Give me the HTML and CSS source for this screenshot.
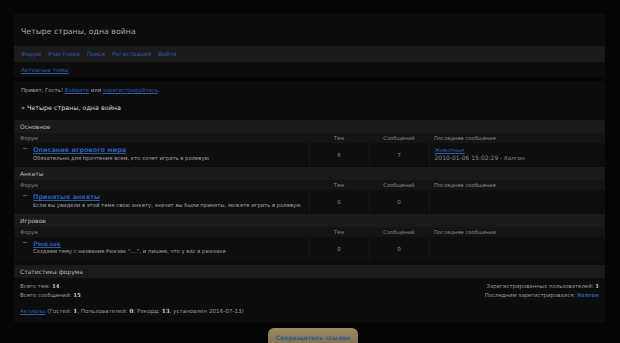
FILE: index.html
```html
<!DOCTYPE html>
<html lang="ru">
<head>
    <meta charset="UTF-8">
    <title>Четыре страны, одна война</title>
    <link rel="stylesheet" href="styles.css">
</head>
<body>
<div class="header-block">
    <div class="site-title">Четыре страны, одна война</div>
    <div class="navbar">
        <a href="#">Форум</a>
        <a href="#">Участники</a>
        <a href="#">Поиск</a>
        <a href="#">Регистрация</a>
        <a href="#">Войти</a>
    </div>
    <div class="subnav"><a href="#">Активные темы</a></div>
</div>

<div class="main-block">
    <div class="greeting">Привет, Гость! <a href="#">Войдите</a> или <a href="#">зарегистрируйтесь</a>.</div>
    <div class="crumbs">» Четыре страны, одна война</div>

    <table class="forum-table">
        <colgroup><col class="w-forum"><col class="w-num"><col class="w-num"><col class="w-last"></colgroup>
        <tr class="cat-head"><td colspan="4">Основное</td></tr>
        <tr class="col-head">
            <td class="c-forum">Форум</td>
            <td class="c-num">Тем</td>
            <td class="c-num">Сообщений</td>
            <td class="c-last">Последнее сообщение</td>
        </tr>
        <tr class="forum-row">
            <td class="c-forum">
                <div class="fcell">
                    <span class="ficon"></span>
                    <div class="finfo">
                        <a href="#" class="fname">Описание игрового мира</a>
                        <div class="fdesc">Обязательно для прочтения всем, кто хочет играть в ролевую</div>
                    </div>
                </div>
            </td>
            <td class="c-num">6</td>
            <td class="c-num">7</td>
            <td class="c-last"><a href="#">Животные</a><br><span class="pdate">2010-01-06 15:02:29</span> - Холгон</td>
        </tr>
    </table>

    <table class="forum-table">
        <colgroup><col class="w-forum"><col class="w-num"><col class="w-num"><col class="w-last"></colgroup>
        <tr class="cat-head"><td colspan="4">Анкеты</td></tr>
        <tr class="col-head">
            <td class="c-forum">Форум</td>
            <td class="c-num">Тем</td>
            <td class="c-num">Сообщений</td>
            <td class="c-last">Последнее сообщение</td>
        </tr>
        <tr class="forum-row">
            <td class="c-forum">
                <div class="fcell">
                    <span class="ficon"></span>
                    <div class="finfo">
                        <a href="#" class="fname">Принятые анкеты</a>
                        <div class="fdesc">Если вы увидели в этой теме свою анкету, значит вы были приняты, можете играть в ролевую</div>
                    </div>
                </div>
            </td>
            <td class="c-num">0</td>
            <td class="c-num">0</td>
            <td class="c-last"></td>
        </tr>
    </table>

    <table class="forum-table gap-top">
        <colgroup><col class="w-forum"><col class="w-num"><col class="w-num"><col class="w-last"></colgroup>
        <tr class="cat-head"><td colspan="4">Игровое</td></tr>
        <tr class="col-head">
            <td class="c-forum">Форум</td>
            <td class="c-num">Тем</td>
            <td class="c-num">Сообщений</td>
            <td class="c-last">Последнее сообщение</td>
        </tr>
        <tr class="forum-row">
            <td class="c-forum">
                <div class="fcell">
                    <span class="ficon"></span>
                    <div class="finfo">
                        <a href="#" class="fname serif">Рюкзак</a>
                        <div class="fdesc">Создаем тему с название Рюкзак "....", и пишем, что у вас в рюкзаке</div>
                    </div>
                </div>
            </td>
            <td class="c-num">0</td>
            <td class="c-num">0</td>
            <td class="c-last"></td>
        </tr>
    </table>

    <div class="stats">
        <div class="cat-head">Статистика форума</div>
        <div class="stats-body">
            <div class="stats-left">
                <div>Всего тем: <b>14</b></div>
                <div>Всего сообщений: <b>15</b></div>
            </div>
            <div class="stats-right">
                <div>Зарегистрированных пользователей: <b>1</b></div>
                <div>Последним зарегистрировался: <a href="#" class="bold-link">Холгон</a></div>
            </div>
        </div>
        <div class="online"><a href="#">Активны</a> (Гостей: <b>1</b>, Пользователей: <b>0</b>; Рекорд: <b>13</b>, установлен 2016-07-13)</div>
    </div>
</div>

<div class="bottom">
    <a href="#" class="short-btn">Сокращатель ссылок</a>
</div>
</body>
</html>
```

FILE: styles.css
```css
body {
    margin: 0;
    padding: 14px 14px 0 14px;
    background-color: #050505;
    font-family: "DejaVu Sans", Verdana, sans-serif;
    font-size: 6px;
    color: #9a9a9a;
    height: 343px;
    box-sizing: border-box;
    overflow: hidden;
}
a {
    color: #2a5ca8;
}

.header-block {
    background-color: #0c0c0c;
    width: 591px;
}
.site-title {
    height: 32px;
    line-height: 36px;
    padding-left: 7px;
    font-size: 7.8px;
    color: #a8a8a8;
}
.navbar {
    height: 16px;
    display: flex;
    align-items: center;
    gap: 7px;
    padding-left: 7px;
    background-color: #1b1b1b;
}
.navbar a {
    text-decoration: none;
    font-size: 5.8px;
}
.subnav {
    height: 15px;
    line-height: 15px;
    padding-left: 7px;
}
.subnav a {
    font-size: 5.8px;
}

.main-block {
    margin-top: 4px;
    background-color: #0c0c0c;
    width: 591px;
}
.greeting {
    height: 19px;
    line-height: 19px;
    padding-left: 7px;
    font-size: 5.4px;
    color: #a0a0a0;
}
.crumbs {
    height: 20px;
    line-height: 16px;
    padding-left: 7px;
    font-size: 6.4px;
    color: #d8d8d8;
}

.forum-table {
    width: 591px;
    border-collapse: collapse;
    table-layout: fixed;
    margin-bottom: 1px;
}
.gap-top {
    margin-top: 1px;
}
.w-forum {
    width: 295px;
}
.w-num {
    width: 60px;
}
.w-last {
    width: 176px;
}
.forum-table td {
    padding: 0;
}
.cat-head td, .stats .cat-head {
    height: 13px;
    background-color: #1a1a1a;
    padding-left: 6px;
    color: #b8b8b8;
    font-size: 6px;
}
.stats .cat-head {
    line-height: 13px;
}
.col-head td {
    height: 10px;
    background-color: #141414;
    font-size: 5.2px;
    color: #8c8c8c;
}
.col-head .c-forum {
    padding-left: 6px;
}
.c-num {
    text-align: center;
}
.forum-table .c-last {
    padding-left: 5px;
}
.forum-row td {
    height: 23px;
    background-color: #0e0e0e;
    border-left: 1px solid #181818;
}
.forum-row td:first-child {
    border-left: none;
}
.forum-row .c-num {
    font-size: 5.6px;
    color: #8a8a8a;
}
.fcell {
    display: flex;
    align-items: flex-start;
    height: 23px;
    padding-top: 3px;
    box-sizing: border-box;
}
.ficon {
    width: 4px;
    height: 1px;
    background-color: #555;
    margin: 2px 6px 0 9px;
}
.fname {
    font-weight: bold;
    font-size: 6.5px;
}
.serif {
    font-family: "DejaVu Serif", serif;
    font-size: 6.2px;
}
.fdesc {
    font-size: 5.3px;
    color: #a4a4a4;
    margin-top: 1px;
    white-space: nowrap;
}
.forum-row .c-last {
    font-size: 5.6px;
    color: #8a8a8a;
    line-height: 7px;
}
.forum-row .c-last a {
    font-size: 5.4px;
}
.pdate {
    font-size: 6px;
}

.stats {
    margin-top: 5px;
}
.stats-body {
    display: flex;
    justify-content: space-between;
    padding: 4px 6px 0 6px;
    line-height: 9px;
    font-size: 5.4px;
}
.stats-right {
    text-align: right;
}
.stats b {
    color: #d0d0d0;
    font-family: "DejaVu Serif", serif;
}
.bold-link {
    font-weight: bold;
    text-decoration: none;
}
.online {
    padding: 8px 6px 0 6px;
    height: 14px;
    font-size: 5.6px;
}

.bottom {
    display: flex;
    justify-content: center;
    margin-top: 6px;
}
.short-btn {
    display: block;
    width: 90px;
    height: 22px;
    line-height: 19px;
    text-align: center;
    background: linear-gradient(#9c8b63, #76674a);
    border-radius: 6px 6px 0 0;
    font-weight: bold;
    font-size: 6px;
    text-decoration: none;
    color: #2a5a9a;
    margin-left: 6px;
}
```
